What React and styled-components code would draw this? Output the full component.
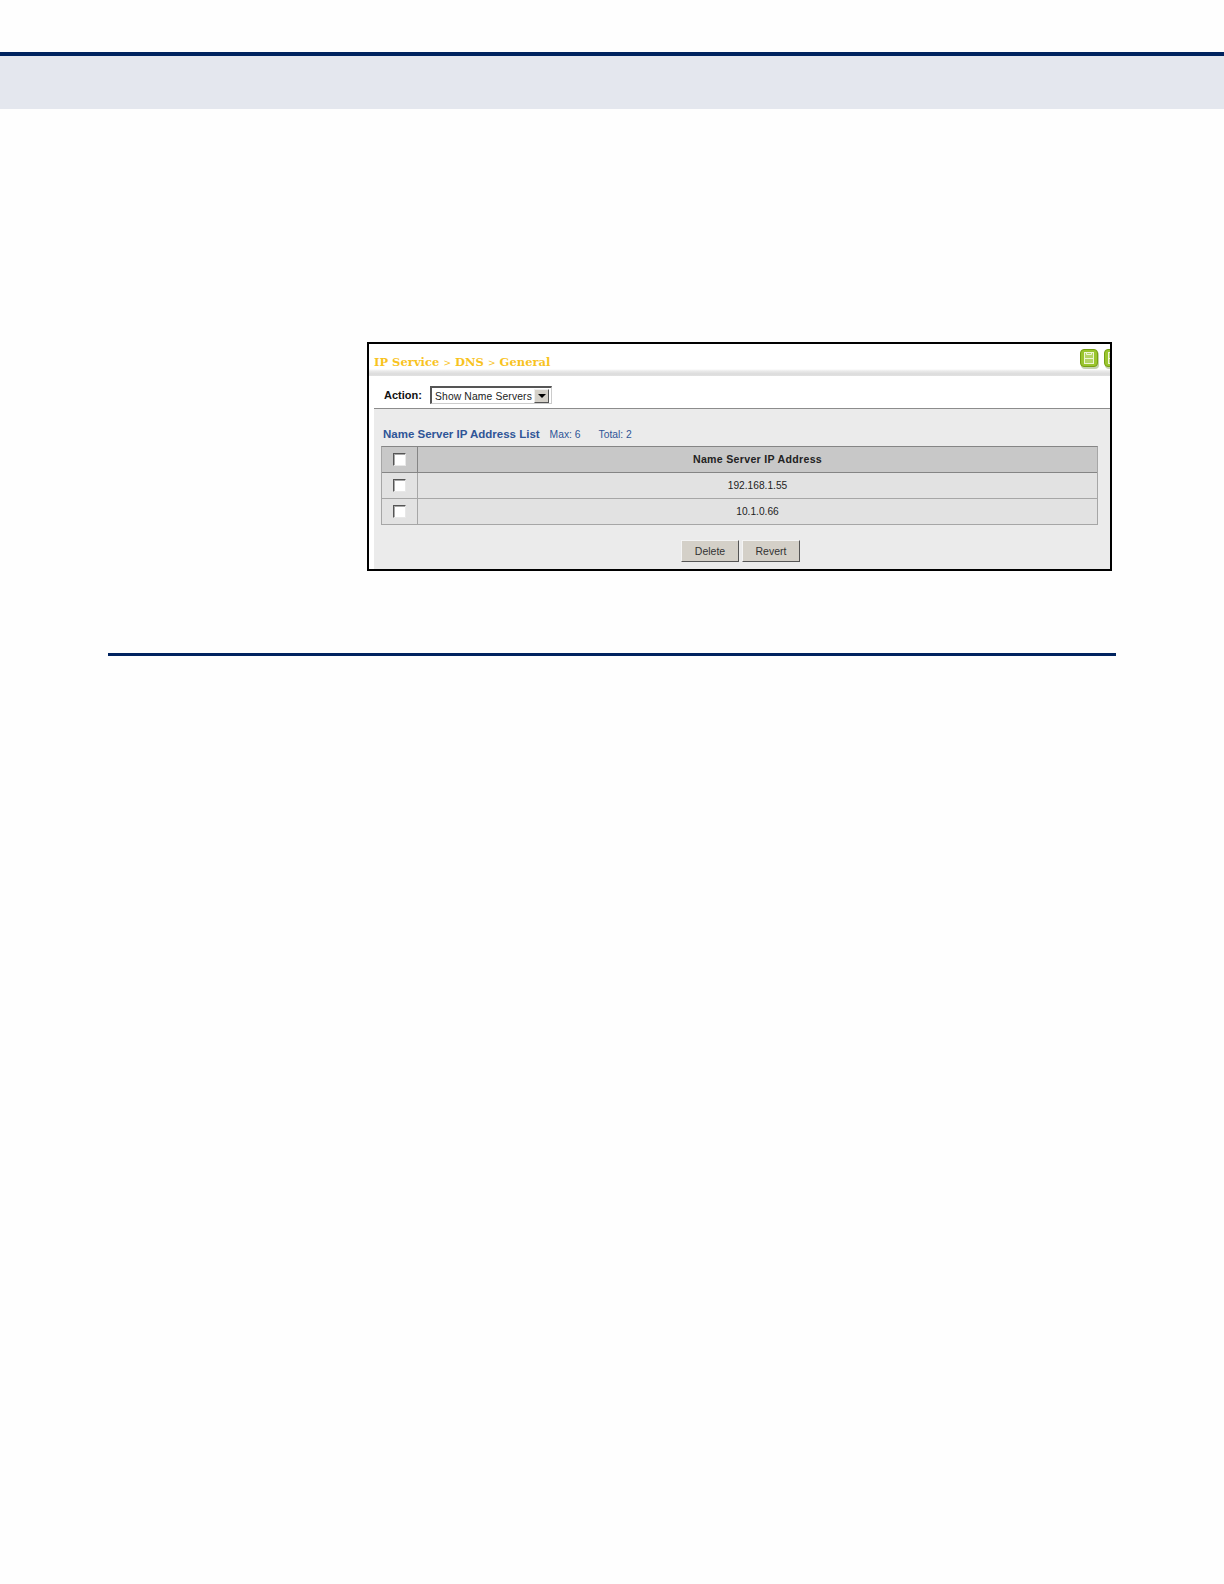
import styled, { createGlobalStyle } from 'styled-components';

const GlobalStyle = createGlobalStyle`
  html, body {
    margin: 0;
    padding: 0;
    background: #fefefe;
  }
  * {
    box-sizing: border-box;
  }
`;

const Page = styled.div`
  width: 1224px;
  height: 1584px;
  padding-top: 52px;
  overflow: hidden;
  font-family: "Liberation Sans", Arial, sans-serif;
`;

const HeaderBand = styled.div`
  height: 57px;
  border-top: 4px solid #00235f;
  background: #e4e7ee;
`;

const Figure = styled.div`
  width: 745px;
  height: 229px;
  margin: 233px 0 0 367px;
  border: 2px solid #000;
  background: #fff;
  display: flex;
  flex-direction: column;
  overflow: hidden;
`;

const TitleBar = styled.div`
  height: 32px;
  flex-shrink: 0;
  padding: 5px 0 0 5px;
  display: flex;
  justify-content: space-between;
  align-items: flex-start;
  background: linear-gradient(to bottom, #fff 0, #fff 25px, #eaeaea 27px, #dcdcdc 30px, #e2e2e2 32px);
`;

const Title = styled.div`
  margin-top: 5px;
  font-family: "DejaVu Serif", "Liberation Serif", serif;
  font-weight: bold;
  font-size: 11.5px;
  letter-spacing: 0.03px;
  line-height: 16px;
  color: #f8c31e;
`;

const TitleArrow = styled.span`
  font-size: 9px;
  font-weight: normal;
`;

const IconGroup = styled.div`
  width: 30px;
  display: flex;
  gap: 5px;
  overflow: hidden;
`;

const SaveIcon = styled.svg`
  width: 19px;
  height: 20px;
  flex-shrink: 0;
`;

const ActionRow = styled.div`
  height: 33px;
  flex-shrink: 0;
  margin-left: 5px;
  padding: 10px 0 0 10px;
  display: flex;
  align-items: flex-start;
  border-bottom: 1px solid #8c8c8c;
`;

const ActionLabel = styled.label`
  width: 46px;
  font-size: 11px;
  line-height: 19px;
  font-weight: bold;
  color: #111;
`;

const SelectBox = styled.div`
  width: 122px;
  height: 18px;
  padding: 1px 2px 0 3px;
  display: flex;
  align-items: center;
  justify-content: space-between;
  border-style: solid;
  border-width: 2px 1px 1px 2px;
  border-color: #555 #ccc #ccc #555;
  background: #fff;
  font-size: 10.3px;
  letter-spacing: 0.15px;
  color: #222;
`;

const SelectArrow = styled.span`
  width: 15px;
  height: 14px;
  margin-top: -1px;
  display: flex;
  align-items: center;
  justify-content: center;
  background: #d4d0c8;
  border: 1px solid;
  border-color: #eee #555 #555 #eee;

  &:after {
    content: '';
    border-style: solid;
    border-width: 4px 4px 0;
    border-color: #000 transparent transparent;
  }
`;

const Content = styled.div`
  flex: 1;
  margin-left: 5px;
  padding: 15px 12px 0 7px;
  background: #ebebeb;
  display: flex;
  flex-direction: column;
`;

const ListHeading = styled.div`
  height: 22px;
  padding-left: 2px;
  display: flex;
  align-items: baseline;
  color: #2f5597;
  line-height: 21px;
`;

const ListTitle = styled.span`
  font-size: 11.5px;
  font-weight: bold;
  margin-right: 10px;
`;

const ListMeta = styled.span`
  font-size: 10.3px;
  margin-right: 18px;
`;

const Table = styled.div`
  border: 1px solid #a6a6a6;
  border-top-color: #858585;
  display: flex;
  flex-direction: column;
`;

const Row = styled.div`
  height: 26px;
  display: grid;
  grid-template-columns: 36px 1fr;
  background: ${({ $head }) => ($head ? '#c8c8c8' : '#e2e2e2')};
  border-bottom: 1px solid ${({ $head }) => ($head ? '#858585' : '#a6a6a6')};

  &:last-child {
    height: 25px;
    border-bottom: 0;
  }
`;

const CheckCell = styled.div`
  padding-bottom: 1px;
  display: flex;
  align-items: center;
  justify-content: center;
  border-right: 1px solid ${({ $head }) => ($head ? '#858585' : '#a6a6a6')};
`;

const CheckBox = styled.span`
  width: 13px;
  height: 13px;
  background: #fff;
  border: 1px solid;
  border-color: #555 #e8e8e8 #e8e8e8 #555;
  box-shadow: inset 1px 1px 0 #a8a8a8;
`;

const ValueCell = styled.div`
  padding-bottom: ${({ $head }) => ($head ? '1px' : '0')};
  display: flex;
  align-items: center;
  justify-content: center;
  font-size: ${({ $head }) => ($head ? '10.6px' : '10.2px')};
  letter-spacing: ${({ $head }) => ($head ? '0.3px' : '0')};
  font-weight: ${({ $head }) => ($head ? 'bold' : 'normal')};
  color: #222;
`;

const ButtonRow = styled.div`
  margin-top: 15px;
  padding-left: 300px;
  display: flex;
  gap: 3px;
`;

const Button = styled.button`
  width: 58px;
  height: 22px;
  padding: 0;
  background: #d4d0c8;
  border: 1px solid;
  border-color: #f4f4f4 #555 #555 #f4f4f4;
  font-family: inherit;
  font-size: 10.5px;
  color: #333;
`;

const Rule = styled.div`
  height: 3px;
  margin: 82px 108px 0 108px;
  background: #00235f;
`;

const FloppyButton = () => (
  <SaveIcon viewBox="0 0 19 20">
    <rect x="1" y="2" width="18" height="18" rx="4" fill="#c4d2ae" />
    <rect x="0.5" y="0.5" width="17" height="17" rx="3.5" fill="#9ac52e" stroke="#76a012" />
    <rect x="4.5" y="3.5" width="9" height="11" fill="#b4d465" stroke="#eef5d4" />
    <path d="M4.5 9.5h9" fill="none" stroke="#eef5d4" />
    <path d="M6.5 3.5v2h5v-2" fill="none" stroke="#eef5d4" />
  </SaveIcon>
);

const rows = ['192.168.1.55', '10.1.0.66'];

const App = () => (
  <Page>
    <GlobalStyle />
    <HeaderBand />
    <Figure>
      <TitleBar>
        <Title>
          IP Service <TitleArrow>&gt;</TitleArrow> DNS <TitleArrow>&gt;</TitleArrow> General
        </Title>
        <IconGroup>
          <FloppyButton />
          <FloppyButton />
        </IconGroup>
      </TitleBar>
      <ActionRow>
        <ActionLabel>Action:</ActionLabel>
        <SelectBox>
          Show Name Servers
          <SelectArrow />
        </SelectBox>
      </ActionRow>
      <Content>
        <ListHeading>
          <ListTitle>Name Server IP Address List</ListTitle>
          <ListMeta>Max: 6</ListMeta>
          <ListMeta>Total: 2</ListMeta>
        </ListHeading>
        <Table>
          <Row $head>
            <CheckCell $head>
              <CheckBox />
            </CheckCell>
            <ValueCell $head>Name Server IP Address</ValueCell>
          </Row>
          {rows.map((ip) => (
            <Row key={ip}>
              <CheckCell>
                <CheckBox />
              </CheckCell>
              <ValueCell>{ip}</ValueCell>
            </Row>
          ))}
        </Table>
        <ButtonRow>
          <Button>Delete</Button>
          <Button>Revert</Button>
        </ButtonRow>
      </Content>
    </Figure>
    <Rule />
  </Page>
);

export default App;
